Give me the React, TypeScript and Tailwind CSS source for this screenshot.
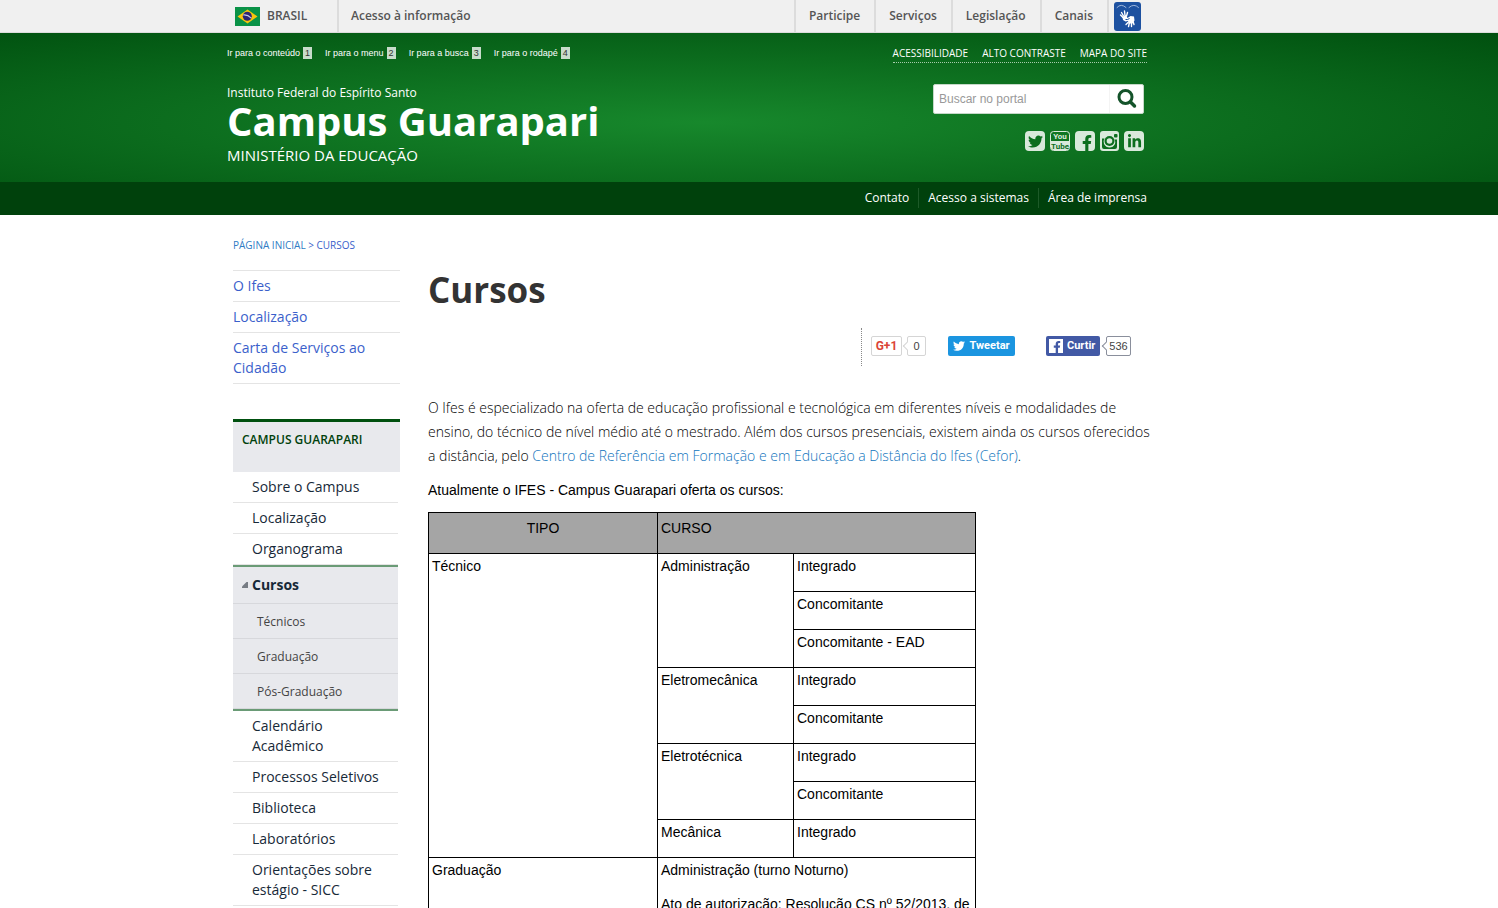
import type { ReactNode } from "react"
import { FaFacebookF, FaLinkedinIn, FaTwitter } from "react-icons/fa"

const skipLinks = ["Ir para o conteúdo", "Ir para o menu", "Ir para a busca", "Ir para o rodapé"]
const govLinks = ["Participe", "Serviços", "Legislação", "Canais"]
const toolLinks = ["Acessibilidade", "Alto contraste", "Mapa do site"]
const serviceLinks = ["Contato", "Acesso a sistemas", "Área de imprensa"]
const topMenu = ["O Ifes", "Localização", "Carta de Serviços ao Cidadão"]
const menuBefore = ["Sobre o Campus", "Localização", "Organograma"]
const subMenu = ["Técnicos", "Graduação", "Pós-Graduação"]
const menuAfter = ["Calendário Acadêmico", "Processos Seletivos", "Biblioteca", "Laboratórios", "Orientações sobre estágio - SICC"]

function Flag() {
  return (
    <svg width="25" height="19" viewBox="0 0 25 19" aria-hidden="true">
      <rect width="25" height="19" fill="#0a9247" />
      <path d="M12.5 2.5 22.5 9.5 12.5 16.5 2.5 9.5Z" fill="#f9c40c" />
      <circle cx="12.3" cy="9.3" r="4.5" fill="#2b2474" />
      <path d="M8.2 8Q12.5 7.4 16.3 11.2" stroke="#c9cbe4" strokeWidth="1.1" fill="none" />
    </svg>
  )
}

function Libras() {
  return (
    <svg width="27" height="29" viewBox="0 0 27 29" aria-hidden="true">
      <rect width="27" height="29" rx="3" fill="#1d51a0" />
      <g fill="none" stroke="#fff" strokeLinecap="round">
        <path d="M3 5.5Q7 1 12 5.5M24.5 5.5Q20 1 15 5.5" stroke="#9fb7dc" strokeWidth="1" />
        <path d="M9 15.5 6.5 13M9.5 14 7.5 10.5M11 13.5 10.5 9M12.5 14 13.5 10.5" strokeWidth="1.4" />
        <path d="M14 20.5 12 22.5M15.5 20.5 14.5 24.5M17.5 20.5 17.5 24.5M19 19.5 20 22.5" strokeWidth="1.4" />
      </g>
      <path d="M8.5 15 12 13 13.5 16 16.5 14 20 14.5 20.5 18.5 18.5 21.5 14.5 21.5 14 19 11.5 19.5 9 18Z" fill="#fff" />
      <path d="M11.5 17.5Q13.5 18 15.5 16.5" stroke="#1d51a0" strokeWidth="1" fill="none" />
    </svg>
  )
}

function YouTubeIcon() {
  return (
    <svg width="20" height="20" viewBox="0 0 20 20" aria-hidden="true">
      <rect x=".5" y=".5" width="19" height="19" rx="3" fill="none" stroke="#d9e9db" />
      <path d="M1 10H19V17Q19 19 17 19H3Q1 19 1 17Z" fill="#d9e9db" />
      <text x="10" y="8" textAnchor="middle" fontSize="8" className="font-['Roboto',sans-serif] font-bold" fill="#d9e9db">You</text>
      <text x="10" y="17.5" textAnchor="middle" fontSize="8" className="font-['Roboto',sans-serif] font-bold" fill="#0c6e1e">Tube</text>
    </svg>
  )
}

function InstagramIcon() {
  return (
    <svg width="19" height="20" viewBox="0 0 19 20" aria-hidden="true">
      <rect width="19" height="20" rx="3" fill="#d9e9db" />
      <path d="M2 7.5H4.5A6 6 0 0 0 4 13Q6 16.500 9.500 16.500T15 13A6 6 0 0 0 14.500 8.500H17V16Q17 18 15 18H4Q2 18 2 16Z" fill="#0c6e1e" />
      <circle cx="9.5" cy="10" r="5" fill="#0c6e1e" />
      <circle cx="9.5" cy="10" r="2.8" fill="#d9e9db" />
      <rect x="14" y="3" width="3.5" height="3.5" rx="1" fill="#0c6e1e" />
    </svg>
  )
}

function SearchIcon() {
  return (
    <svg width="20" height="20" viewBox="0 0 20 20" fill="none" stroke="#14532a" aria-hidden="true">
      <circle cx="8.5" cy="8" r="6.5" strokeWidth="3" />
      <path d="M13.5 13 17.5 17" strokeWidth="3.5" strokeLinecap="round" />
    </svg>
  )
}

function SocialLink({ label, children }: { label: string; children: ReactNode }) {
  return (
    <a href="#" aria-label={label} className="flex size-5 items-center justify-center rounded-sm bg-[#d9e9db] text-[#0c6e1e]">
      {children}
    </a>
  )
}

function MenuItem({ label }: { label: string }) {
  return (
    <li className="border-b border-[#e4e4e4]">
      <a href="#" className="block py-[5px] pr-3 pl-[19px]">{label}</a>
    </li>
  )
}

function Count({ value, className }: { value: string; className: string }) {
  return (
    <span className={`relative flex h-5 items-center justify-center rounded-xs border bg-white text-[11px] text-[#444] ${className}`}>
      <span className="absolute top-[6px] -left-1 size-1.5 rotate-45 border-b border-l border-inherit bg-white" />
      {value}
    </span>
  )
}

// Table cell with the paragraph spacing of the article text
function Cell({ children, rowSpan, colSpan }: { children: ReactNode; rowSpan?: number; colSpan?: number }) {
  return (
    <td rowSpan={rowSpan} colSpan={colSpan} className="border border-black px-[3px] pb-[13px] align-top">
      {children}
    </td>
  )
}

export default function App() {
  return (
    <div className="min-h-screen bg-white font-['Open_Sans',sans-serif] text-sm leading-5 text-black">
      {/* Government bar */}
      <div className="border-b border-[#dcdcdc] bg-[#f0f0f0] text-xs font-semibold text-[#555]">
        <div className="ml-[227px] flex h-8 max-w-[920px]">
          <a href="#" className="flex w-28 items-center gap-[7px] border-r-2 border-[#dcdcdc] pl-2">
            <Flag />
            BRASIL
          </a>
          <a href="#" className="flex items-center pl-3">Acesso à informação</a>
          <nav className="ml-auto flex pr-1.5" aria-label="Governo">
            {govLinks.map((label) => (
              <a key={label} href="#" className="flex items-center border-l-2 border-[#dcdcdc] pr-3.5 pl-[13px]">{label}</a>
            ))}
            <a href="#" aria-label="VLibras" className="flex items-center border-l-2 border-[#dcdcdc] pl-[5px]">
              <Libras />
            </a>
          </nav>
        </div>
      </div>

      {/* Header */}
      <header className="text-white">
        <div className="bg-[radial-gradient(ellipse_at_47%_60%,#17882c_0%,#00500f_100%)]">
          <div className="ml-[227px] flex h-[149px] max-w-[920px] justify-between">
            <div>
              <ul className="flex gap-[13px] pt-3.5 font-['Liberation_Sans',sans-serif] text-[9px] leading-3">
                {skipLinks.map((label, i) => (
                  <li key={label}>
                    <a href="#" className="flex gap-[3px]">
                      {label}
                      <span className="bg-[#c8dccb] px-0.5 text-[#333]">{i + 1}</span>
                    </a>
                  </li>
                ))}
              </ul>
              <a href="#" className="mt-[26px] block">
                <span className="block text-xs leading-4">Instituto Federal do Espírito Santo</span>
                <span className="block text-[40px] leading-10 font-bold">Campus Guarapari</span>
                <span className="block pt-1 text-[15px] leading-5">MINISTÉRIO DA EDUCAÇÃO</span>
              </a>
            </div>
            <div className="flex flex-col items-end">
              <ul className="mt-3 flex border-b border-dotted border-[#a5cbab] text-[10px] leading-[17px] uppercase">
                {toolLinks.map((label) => (
                  <li key={label} className="pl-3.5 first:pl-0"><a href="#">{label}</a></li>
                ))}
              </ul>
              <form role="search" className="mt-[21px] mr-[3px] flex h-[30px] w-[211px] rounded-xs border border-[#c5d8c8] bg-white">
                <input
                  type="search"
                  aria-label="Buscar no portal"
                  placeholder="Buscar no portal"
                  className="min-w-0 flex-1 px-[5px] font-['Liberation_Sans',sans-serif] text-xs placeholder:text-[#999]"
                />
                <button type="submit" aria-label="Buscar" className="flex w-[34px] items-center justify-center border-l border-[#f4f4f4]">
                  <SearchIcon />
                </button>
              </form>
              <div className="mt-[17px] mr-[3px] flex gap-[5px]">
                <SocialLink label="Twitter"><FaTwitter size={15} /></SocialLink>
                <a href="#" aria-label="YouTube"><YouTubeIcon /></a>
                <SocialLink label="Facebook"><FaFacebookF size={16} className="mt-1 ml-1" /></SocialLink>
                <a href="#" aria-label="Instagram"><InstagramIcon /></a>
                <SocialLink label="LinkedIn"><FaLinkedinIn size={15} /></SocialLink>
              </div>
            </div>
          </div>
        </div>
        <div className="bg-[#00410c]">
          <nav className="ml-[227px] flex h-[33px] max-w-[920px] items-center justify-end pb-0.5 text-xs leading-5" aria-label="Serviços">
            {serviceLinks.map((label) => (
              <a key={label} href="#" className="border-l border-[#1d5a28] px-[9px] first:border-l-0 last:pr-0">{label}</a>
            ))}
          </nav>
        </div>
      </header>

      <div className="ml-[233px] max-w-[914px]">
        <nav className="pt-5 text-[10px] text-[#3b5fcb] uppercase" aria-label="Trilha">
          <a href="#" className="text-[#2f7cc4]">Página inicial</a> &gt; Cursos
        </nav>

        <div className="flex gap-7 pt-[15px]">
          {/* Side menu */}
          <aside className="w-[167px] shrink-0">
            <ul className="border-t border-[#e4e4e4] text-[#3b5fcb]">
              {topMenu.map((label) => (
                <li key={label} className="border-b border-[#e4e4e4]">
                  <a href="#" className="block py-[5px]">{label}</a>
                </li>
              ))}
            </ul>
            <h2 className="mt-[35px] h-[53px] border-t-3 border-[#00500f] bg-[#e8e9ed] px-[9px] pt-2 text-xs leading-5 font-semibold text-[#00410c] uppercase">
              Campus Guarapari
            </h2>
            <ul className="mr-0.5 text-[#172938]">
              {menuBefore.map((label) => <MenuItem key={label} label={label} />)}
              <li className="border-y-2 border-[#6a9b76] bg-[#e8e9ed]">
                <a href="#" className="flex items-center gap-1 border-b border-[#d7d8dc] py-2 pl-[9px] font-bold">
                  <svg width="6" height="6" viewBox="0 0 6 6" aria-hidden="true"><path d="M4.5 0H6V6H0V4.5Z" fill="#777c84" /></svg>
                  Cursos
                </a>
                <ul className="text-xs leading-5 text-[#444]">
                  {subMenu.map((label) => (
                    <li key={label} className="border-b border-[#d7d8dc]">
                      <a href="#" className="block pt-2 pb-1.5 pl-6">{label}</a>
                    </li>
                  ))}
                </ul>
              </li>
              {menuAfter.map((label) => <MenuItem key={label} label={label} />)}
            </ul>
          </aside>

          {/* Article */}
          <main className="min-w-0 flex-1">
            <h1 className="text-[35px] leading-10 font-bold text-[#333]">Cursos</h1>
            <div className="mt-[18px] flex justify-end pr-4 font-['Liberation_Sans',sans-serif] leading-4">
              <div className="flex h-[38px] items-center border-l border-dotted border-[#888] pb-0.5 pl-[9px]">
                <button type="button" aria-label="Google +1" className="mr-[5px] flex h-5 w-[31px] items-center justify-center rounded-xs border border-[#d5d5d5] font-['Roboto',sans-serif] text-xs font-bold text-[#db4437]">
                  G+1
                </button>
                <Count value="0" className="w-[19px] border-[#d5d5d5]" />
                <button type="button" className="ml-[22px] flex h-5 w-[67px] items-center justify-center gap-1 rounded-xs bg-[#1b95e0] font-['Roboto',sans-serif] text-[11px] font-bold text-white">
                  <FaTwitter size={12} />
                  Tweetar
                </button>
                <button type="button" className="mr-1.5 ml-[31px] flex h-5 w-[54px] items-center gap-1 rounded-xs bg-[#4259a5] pl-[3px] font-['Roboto',sans-serif] text-[11px] font-bold text-white">
                  <span className="flex size-3.5 items-end justify-end bg-white text-[#4259a5]"><FaFacebookF size={12} /></span>
                  Curtir
                </button>
                <Count value="536" className="w-[25px] border-[#8a8f9c]" />
              </div>
            </div>

            <p className="mt-[30px] -mr-4 leading-6 font-light">
              O Ifes é especializado na oferta de educação profissional e tecnológica em diferentes níveis e modalidades de
              <br />
              ensino, do técnico de nível médio até o mestrado. Além dos cursos presenciais, existem ainda os cursos oferecidos
              <br />
              a distância, pelo <a href="#" className="text-[#0f74bd]">Centro de Referência em Formação e em Educação a Distância do Ifes (Cefor)</a>.
            </p>
            <div className="font-['Liberation_Sans',sans-serif] leading-6">
              <p className="mt-2.5 mb-2.5">Atualmente o IFES - Campus Guarapari oferta os cursos:</p>
              <table className="w-[548px] table-fixed border-collapse">
                <colgroup>
                  <col className="w-[229px]" />
                  <col className="w-[136px]" />
                  <col />
                </colgroup>
                <thead>
                  <tr className="bg-[#a5a5a5]">
                    <th className="border border-black px-[3px] pt-[3px] pb-[13px] text-center font-normal">TIPO</th>
                    <th colSpan={2} className="border border-black px-[3px] pt-[3px] pb-[13px] text-left font-normal">CURSO</th>
                  </tr>
                </thead>
                <tbody>
                  <tr>
                    <Cell rowSpan={8}>Técnico</Cell>
                    <Cell rowSpan={3}>Administração</Cell>
                    <Cell>Integrado</Cell>
                  </tr>
                  <tr><Cell>Concomitante</Cell></tr>
                  <tr><Cell>Concomitante - EAD</Cell></tr>
                  <tr>
                    <Cell rowSpan={2}>Eletromecânica</Cell>
                    <Cell>Integrado</Cell>
                  </tr>
                  <tr><Cell>Concomitante</Cell></tr>
                  <tr>
                    <Cell rowSpan={2}>Eletrotécnica</Cell>
                    <Cell>Integrado</Cell>
                  </tr>
                  <tr><Cell>Concomitante</Cell></tr>
                  <tr>
                    <Cell>Mecânica</Cell>
                    <Cell>Integrado</Cell>
                  </tr>
                  <tr>
                    <Cell>Graduação</Cell>
                    <Cell colSpan={2}>
                      <p className="mb-2.5">Administração (turno Noturno)</p>
                      <p>Ato de autorização: Resolução CS nº 52/2013, de</p>
                    </Cell>
                  </tr>
                </tbody>
              </table>
            </div>
          </main>
        </div>
      </div>
    </div>
  )
}
